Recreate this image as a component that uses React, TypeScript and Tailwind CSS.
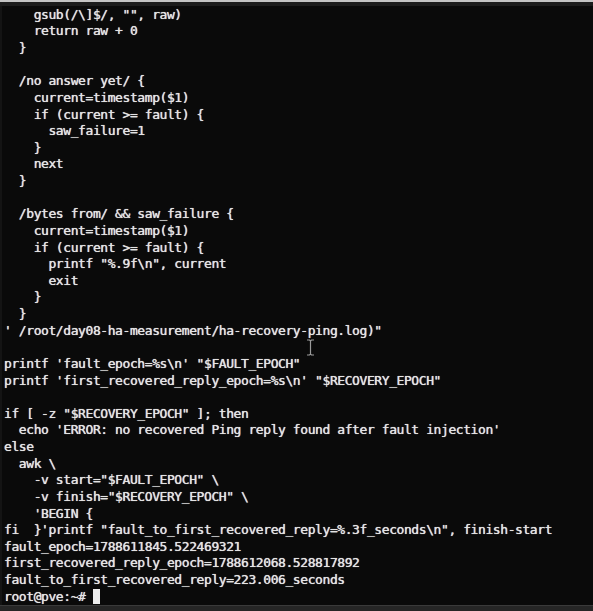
const lines: string[] = [
  "    gsub(/\\]$/, \"\", raw)",
  "    return raw + 0",
  "  }",
  "",
  "  /no answer yet/ {",
  "    current=timestamp($1)",
  "    if (current >= fault) {",
  "      saw_failure=1",
  "    }",
  "    next",
  "  }",
  "",
  "  /bytes from/ && saw_failure {",
  "    current=timestamp($1)",
  "    if (current >= fault) {",
  "      printf \"%.9f\\n\", current",
  "      exit",
  "    }",
  "  }",
  "' /root/day08-ha-measurement/ha-recovery-ping.log)\"",
  "",
  "printf 'fault_epoch=%s\\n' \"$FAULT_EPOCH\"",
  "printf 'first_recovered_reply_epoch=%s\\n' \"$RECOVERY_EPOCH\"",
  "",
  "if [ -z \"$RECOVERY_EPOCH\" ]; then",
  "  echo 'ERROR: no recovered Ping reply found after fault injection'",
  "else",
  "  awk \\",
  "    -v start=\"$FAULT_EPOCH\" \\",
  "    -v finish=\"$RECOVERY_EPOCH\" \\",
  "    'BEGIN {",
  "fi  }'printf \"fault_to_first_recovered_reply=%.3f_seconds\\n\", finish-start",
  "fault_epoch=1788611845.522469321",
  "first_recovered_reply_epoch=1788612068.528817892",
  "fault_to_first_recovered_reply=223.006_seconds",
];

export default function App() {
  return (
    <div className="relative w-[593px] h-[611px] bg-[#0a0a0a] flex flex-col overflow-hidden">
      {/* window chrome */}
      <div className="h-[2px] bg-[#c4c4c4]" />
      <div className="h-[4px] bg-[#1c1c1c]" />

      <div className="flex-1 border-l-2 border-[#141414] pl-[2px] pt-px font-['DejaVu_Sans_Mono',monospace] text-[13px] tracking-[-0.42px] leading-[16.63px] text-[#e4e4e4] [text-shadow:0_0_0.7px_#ffffff] whitespace-pre">
        {lines.map((line, i) => (
          <div key={i} className="h-[16.63px]">
            {line}
          </div>
        ))}
        <div className="h-[16.63px] flex items-center">
          <span>root@pve:~# </span>
          <span className="inline-block w-[7.4px] h-[15px] bg-[#ececec]" />
        </div>
      </div>

      <div className="h-px bg-[#3a3a3a]" />
      <div className="h-[5px] bg-[#262626]" />

      {/* mouse I-beam */}
      <svg
        className="absolute left-[306px] top-[339px]"
        width="9"
        height="17"
        viewBox="0 0 9 17"
      >
        <path
          d="M1 1h2.5L4.5 2 5.5 1H8M4.5 2v13M1 16h2.5l1-1 1 1H8"
          fill="none"
          stroke="#9a9a9a"
          strokeWidth="1.2"
        />
      </svg>
    </div>
  );
}
